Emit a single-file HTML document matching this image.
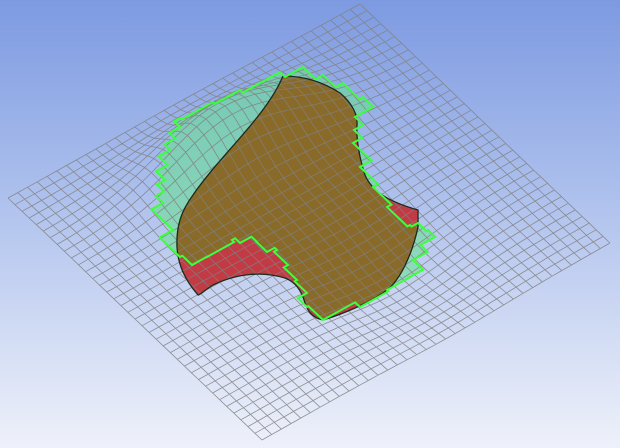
<!DOCTYPE html>
<html><head><meta charset="utf-8"><style>
html,body{margin:0;padding:0;width:620px;height:448px;overflow:hidden}
body{background:linear-gradient(#7d9ae1 0%,#a9bdec 40%,#d2dcf4 75%,#eef1fa 100%)}
svg{position:absolute;left:0;top:0}
</style></head><body>
<svg id="s" width="620" height="448" viewBox="0 0 620 448">
<defs>
<clipPath id="gc"><polygon id="gp1" points=""/></clipPath>
</defs>
<polygon id="gfill" points="" fill="rgba(100,225,140,0.55)"/>
<path id="red" d="" fill="#c23a44"/>
<path id="brown" d="" fill="#8a6a28" clip-path="url(#gc)"/>
<g id="mesh" stroke="rgba(128,128,128,0.85)" stroke-width="0.8" fill="none"></g>
<path id="outl" d="" fill="none" stroke="#1c2a1c" stroke-width="1.3"/>
<polygon id="gline" points="" fill="none" stroke="#3dff3d" stroke-width="2"/>
</svg>
<script>
var G0="180,257 192,265 207,257 232,240 240,243 257,242 267,252 277,250 288,265 297,280 307,293 307,307 323,320 360,307 387,290 410,277 413,260 428,230 418,223 410,225 387,207 373,187 360,167 353,143 355,117 363,97 350,90 343,83 303,67 280,72 260,83 240,90 213,102 180,118 180,127 170,150 165,180 163,203 173,230";
var L=[8,198],T=[360,4],B=[262,440],R=[610,243],N=36;
var e1=[(T[0]-L[0])/N,(T[1]-L[1])/N],e2=[(B[0]-L[0])/N,(B[1]-L[1])/N];
var pts=G0.split(" ").map(function(s){return s.split(",").map(Number)});
var out=[];
for(var k=0;k<pts.length;k++){
 var a=pts[k],b=pts[(k+1)%pts.length];
 var dx=b[0]-a[0],dy=b[1]-a[1];
 var det=e1[0]*e2[1]-e1[1]*e2[0];
 var s=(dx*e2[1]-dy*e2[0])/det,t=(e1[0]*dy-e1[1]*dx)/det;
 var n=Math.max(1,Math.round(Math.min(Math.abs(s),Math.abs(t))));
 var cx=a[0],cy=a[1];out.push([cx,cy]);
 for(var m=0;m<n;m++){
  cx+=e1[0]*s/n;cy+=e1[1]*s/n;out.push([cx,cy]);
  cx+=e2[0]*t/n;cy+=e2[1]*t/n;out.push([cx,cy]);
 }
}
var G=out.map(function(p){return p[0].toFixed(1)+","+p[1].toFixed(1)}).join(" ");
["gp1","gfill","gline"].forEach(function(i){document.getElementById(i).setAttribute("points",G)});
var D="M283,76 C300,76 320,80 340,93 C352,103 358,115 357,125 C356,140 360,160 365,175 C372,192 390,202 418,210 L418,227 C412,255 400,280 387,290 C370,303 340,315 323,320 C313,318 308,312 305,303 C302,292 296,282 285,278 C265,272 240,272 213,285 C205,290 200,295 198,295 C185,280 178,265 177,247 C176,225 182,210 193,195 C210,170 235,145 255,120 C268,104 278,88 283,76 Z";
["red","brown","outl"].forEach(function(i){document.getElementById(i).setAttribute("d",D)});
function P(u,v){
 var x=L[0]+u*(T[0]-L[0])+v*(B[0]-L[0])+u*v*(R[0]-T[0]-B[0]+L[0]);
 var y=L[1]+u*(T[1]-L[1])+v*(B[1]-L[1])+u*v*(R[1]-T[1]-B[1]+L[1]);
 var du=u-0.5,dv=v-0.2,g=Math.exp(-(du*du/0.06+dv*dv/0.012));
 y-=42*g;x-=8*g;
 var eu=u-0.55,ev=v-0.75;
 y+=14*Math.exp(-(eu*eu/0.04+ev*ev/0.04));
 return [x,y];
}
var d="";
for(var i=0;i<=N;i++){
 var a="",b="";
 for(var j=0;j<=N;j++){
  var p=P(i/N,j/N),q=P(j/N,i/N);
  a+=(j?"L":"M")+p[0].toFixed(1)+","+p[1].toFixed(1);
  b+=(j?"L":"M")+q[0].toFixed(1)+","+q[1].toFixed(1);
 }
 d+=a+b;
}
var pa=document.createElementNS("http://www.w3.org/2000/svg","path");
pa.setAttribute("d",d);document.getElementById("mesh").appendChild(pa);
</script>
</body></html>
